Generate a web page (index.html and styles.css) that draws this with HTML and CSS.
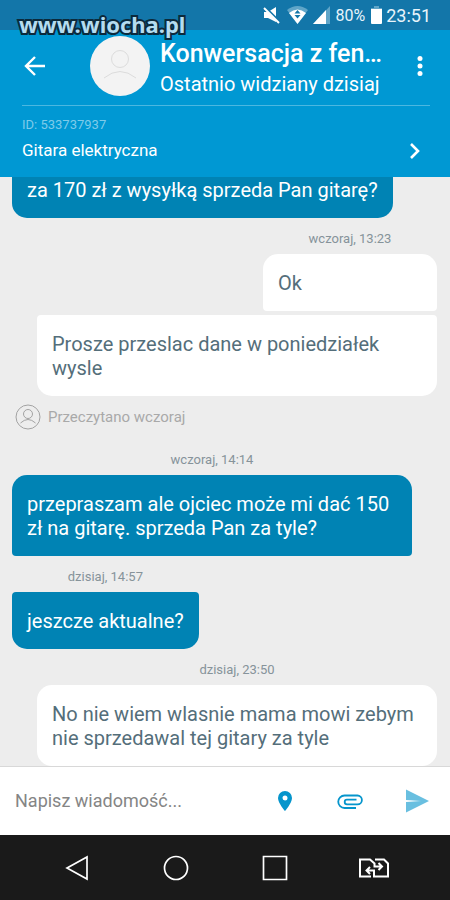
FILE: index.html
```html
<!DOCTYPE html>
<html lang="pl">
<head>
<meta charset="utf-8">
<meta name="viewport" content="width=device-width, initial-scale=1">
<title>Konwersacja</title>
<link rel="stylesheet" href="styles.css">
</head>
<body>
<div class="statusbar">
  <svg class="mute" width="17" height="18" viewBox="0 0 17 18"><path fill="#fff" d="M1 6h4l8-5v15l-8-4H1z"/><path d="M1 0.500l15 15" stroke="#1376a9" stroke-width="3"/><path d="M1 2l15 15" stroke="#fff" stroke-width="2"/></svg>
  <svg class="wifi" width="21" height="18" viewBox="0 0 21 18"><path fill="#5fa5c8" d="M0 4q10.500-8 21 0L10.500 18z"/><path fill="#fff" d="M2 7q8.500-7 17 0l-8.500 11z"/><path fill="#1376a9" d="M10.500 4l3 3.500h-6zM7.500 9h6l-3 3.500z"/></svg>
  <svg class="signal" width="17" height="18" viewBox="0 0 17 18"><path fill="#5fa5c8" d="M17 0v18H0z"/><path fill="#fff" d="M13 4v14H0z"/></svg>
  <span class="percent">80%</span>
  <svg class="battery" width="11" height="18" viewBox="0 0 11 18"><path fill="#5fa5c8" d="M3 0h5v2h3v4H0V2h3z"/><path fill="#fff" d="M0 3h11v14q0 1-1 1H1q-1 0-1-1z"/></svg>
  <time class="clock">23:51</time>
</div>
<div class="watermark">www.wiocha.pl</div>
<header class="header">
  <div class="contact">
    <button class="icon-button back" aria-label="Wstecz"><svg width="22" height="20" viewBox="0 0 22 20" fill="none" stroke="#fff" stroke-width="2.400"><path d="M21 10H3M11 1l-9 9 9 9"/></svg></button>
    <svg class="avatar" width="60" height="60" viewBox="0 0 60 60" fill="none" stroke="#dcdcdc"><circle cx="30" cy="30" r="30" fill="#f3f3f3" stroke="none"/><circle cx="30" cy="23" r="8.500"/><path d="M14 42q16-13 32 0"/></svg>
    <div class="who">
      <h1 class="title">Konwersacja z fen…</h1>
      <p class="seen">Ostatnio widziany dzisiaj</p>
    </div>
    <button class="icon-button more" aria-label="Więcej"><svg width="6" height="20" viewBox="0 0 6 20" fill="#fff"><circle cx="3" cy="2.500" r="2.500"/><circle cx="3" cy="10" r="2.500"/><circle cx="3" cy="17.500" r="2.500"/></svg></button>
  </div>
  <a class="offer" href="#">
    <span class="offer-text"><span class="offer-id">ID: 533737937</span><span class="offer-name">Gitara elektryczna</span></span>
    <svg width="10" height="16" viewBox="0 0 10 16" fill="none" stroke="#fff" stroke-width="2.600"><path d="M1 1l7 7-7 7"/></svg>
  </a>
</header>
<main class="chat">
  <div class="group">
    <p class="bubble theirs last">za 170 zł z wysyłką sprzeda Pan gitarę?</p>
  </div>
  <div class="group own">
    <time class="stamp">wczoraj, 13:23</time>
    <p class="bubble mine first">Ok</p>
  </div>
  <div class="group own next">
    <p class="bubble mine last">Prosze przeslac dane w poniedziałek wysle</p>
  </div>
  <div class="read">
    <svg width="26" height="26" viewBox="0 0 26 26" fill="none" stroke="#a3a3a3"><circle cx="13" cy="13" r="12"/><circle cx="13" cy="10" r="4.500"/><path d="M5.500 19q7.500-7 15 0"/></svg>
    <span>Przeczytano wczoraj</span>
  </div>
  <div class="group">
    <time class="stamp">wczoraj, 14:14</time>
    <p class="bubble theirs first">przepraszam ale ojciec może mi dać 150 zł na gitarę. sprzeda Pan za tyle?</p>
  </div>
  <div class="group">
    <time class="stamp">dzisiaj, 14:57</time>
    <p class="bubble theirs last">jeszcze aktualne?</p>
  </div>
  <div class="group own">
    <time class="stamp">dzisiaj, 23:50</time>
    <p class="bubble mine first last">No nie wiem wlasnie mama mowi zebym nie sprzedawal tej gitary za tyle</p>
  </div>
</main>
<form class="composer">
  <input class="message" type="text" placeholder="Napisz wiadomość..." aria-label="Wiadomość">
  <button class="icon-button" type="button" aria-label="Lokalizacja"><svg width="26" height="24" viewBox="0 0 26 24"><path fill="#0595cc" fill-rule="evenodd" d="M13 2a7 7 0 0 0-7 7c0 5 7 13 7 13s7-8 7-13a7 7 0 0 0-7-7zm0 4.500a2.500 2.500 0 1 1 0 5 2.500 2.500 0 0 1 0-5z"/></svg></button>
  <button class="icon-button" type="button" aria-label="Załącznik"><svg width="26" height="24" viewBox="0 0 26 24" fill="none" stroke="#0595cc" stroke-width="1.800"><path d="M19 19H7.500a6 6 0 0 1 0-12.500H20.500a4.400 4.400 0 0 1 0 8.800H10a2.300 2.300 0 0 1 0-4.600H19.500"/></svg></button>
  <button class="icon-button send" type="submit" aria-label="Wyślij"><svg width="24" height="24" viewBox="0 0 24 24"><path fill="#69bfe0" d="M1 0.500L24 12 1 23.500V13l15-1L1 11z"/></svg></button>
</form>
<nav class="navbar">
  <button class="icon-button" aria-label="Wstecz"><svg width="26" height="26" viewBox="0 0 26 26" fill="none" stroke="#fff" stroke-width="1.700"><path d="M23 2v22L3 13z"/></svg></button>
  <button class="icon-button" aria-label="Ekran główny"><svg width="26" height="26" viewBox="0 0 26 26" fill="none" stroke="#fff" stroke-width="1.700"><circle cx="13" cy="13" r="11.500"/></svg></button>
  <button class="icon-button" aria-label="Ostatnie"><svg width="26" height="26" viewBox="0 0 26 26" fill="none" stroke="#fff" stroke-width="1.700"><path d="M1.500 1.500h23v23h-23z"/></svg></button>
  <button class="icon-button" aria-label="Karta SIM"><svg width="30" height="20" viewBox="0 0 30 20" fill="none" stroke="#fff" stroke-width="2"><path d="M12 18.500H1V1.500h10l4.500 4v3h7M19.500 5l3.500 3.500-3.500 3.500M16 1.500h9l4 4v13H15v-6H8M11 9l-3.500 3.500L11 16"/></svg></button>
</nav>
</body>
</html>
```
FILE: styles.css
```css
* { box-sizing: border-box; }
html, body { height: 100%; }
body {
  margin: 0;
  display: flex;
  flex-direction: column;
  position: relative;
  overflow: hidden;
  background: #ededed;
  font-family: Roboto, "Liberation Sans", sans-serif;
}
h1, p { margin: 0; }
svg { display: block; flex: none; }
button { font: inherit; }
.icon-button {
  display: flex;
  align-items: center;
  justify-content: center;
  padding: 0;
  border: 0;
  background: none;
  cursor: pointer;
}
.statusbar {
  flex: none;
  display: flex;
  align-items: center;
  justify-content: flex-end;
  height: 30px;
  padding: 0 19px;
  background: #1376a9;
  color: #e8f4fb;
}
.mute { margin-right: 7px; }
.wifi { margin-right: 5px; }
.signal { margin-right: 5px; }
.battery { margin: 0 4px 0 6px; }
.percent { font-size: 16px; }
.clock { font-size: 18px; }
.watermark {
  position: absolute;
  left: 19px;
  top: 8px;
  font: bold 22px/32px "Noto Sans", sans-serif;
  color: #b4dcf0;
  -webkit-text-stroke: 4px #0b2a3c;
  paint-order: stroke fill;
}
.header {
  flex: none;
  background: #0098d3;
  color: #fff;
}
.contact {
  display: flex;
  align-items: center;
  height: 76px;
  margin: 0 20px 0 22px;
  padding-bottom: 4px;
  border-bottom: 1px solid #4cb7e0;
}
.back { width: 26px; height: 44px; margin-right: 42px; }
.who { flex: 1; min-width: 0; margin-left: 10px; }
.title {
  font-size: 25px;
  line-height: 32px;
  font-weight: 500;
  white-space: nowrap;
  overflow: hidden;
  text-overflow: ellipsis;
}
.seen { font-size: 20px; line-height: 28px; white-space: nowrap; }
.who { padding-top: 4px; }
.more { width: 20px; height: 44px; margin-left: 16px; }
.offer {
  display: flex;
  align-items: flex-end;
  justify-content: space-between;
  height: 71px;
  padding: 0 30px 18px 22px;
  color: inherit;
  text-decoration: none;
}
.offer-text { display: flex; flex-direction: column; gap: 8px; }
.offer-id { font-size: 13px; line-height: 16px; color: #7fcbe9; }
.offer-name { font-size: 17px; line-height: 18px; }
.chat {
  flex: 1;
  min-height: 0;
  overflow: hidden;
  display: flex;
  flex-direction: column;
  justify-content: flex-end;
  align-items: flex-start;
  padding: 0 13px 0 12px;
}
.group {
  flex: none;
  display: flex;
  flex-direction: column;
  align-items: center;
  max-width: 400px;
}
.own { align-self: flex-end; }
.next { margin-top: 4px; }
.stamp {
  padding: 13px 0 7px;
  font-size: 13px;
  line-height: 16px;
  color: #86939a;
}
.bubble {
  min-width: 174px;
  padding: 17px 15px 16px;
  border-radius: 4px;
  font-size: 20px;
  line-height: 24px;
}
.theirs { background: #0083b4; color: #fff; }
.mine { background: #fff; color: #546e7a; }
.first { border-top-left-radius: 15px; border-top-right-radius: 15px; }
.last { border-bottom-left-radius: 15px; border-bottom-right-radius: 15px; }
.read {
  flex: none;
  display: flex;
  align-items: center;
  gap: 7px;
  padding: 8px 3px 9px;
  font-size: 15px;
  line-height: 20px;
  color: #a9a9a9;
}
.composer {
  flex: none;
  display: flex;
  align-items: center;
  height: 69px;
  padding: 0 21px 0 15px;
  gap: 39px;
  border-top: 1px solid #d8d8d8;
  background: #fff;
}
.message {
  flex: 1;
  min-width: 0;
  padding: 0;
  border: 0;
  outline: 0;
  background: none;
  font: 18px/24px Roboto, "Liberation Sans", sans-serif;
  color: #546e7a;
}
.message::placeholder { color: #858585; opacity: 1; }
.composer .icon-button { height: 48px; }
.composer .send { width: 27px; justify-content: flex-end; }
.navbar {
  flex: none;
  display: grid;
  grid-template-columns: repeat(4, 1fr);
  height: 65px;
  padding: 0 27px;
  background: #1a1a1a;
}
```
